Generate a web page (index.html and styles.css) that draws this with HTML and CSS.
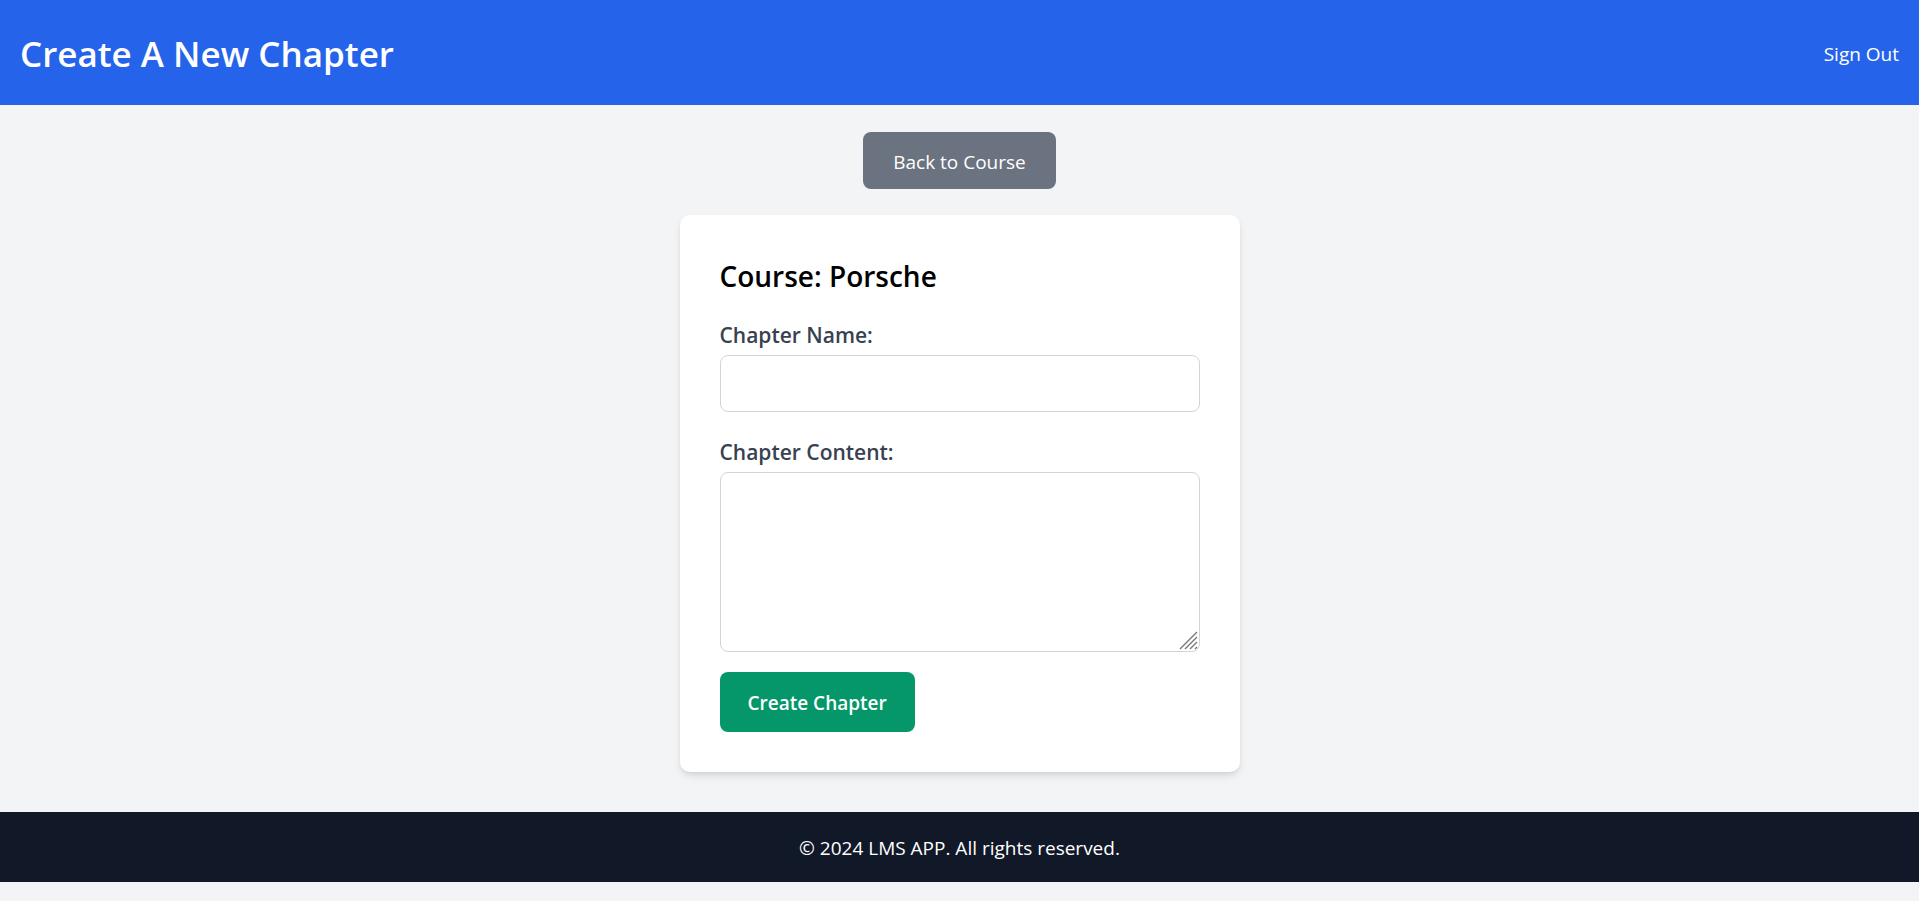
FILE: index.html
```html
<!DOCTYPE html>
<html lang="en">
<head>
  <meta charset="utf-8">
  <meta name="viewport" content="width=device-width, initial-scale=1">
  <title>Create A New Chapter</title>
  <link rel="stylesheet" href="styles.css">
</head>
<body>
  <header class="header">
    <h1 class="header-title">Create A New Chapter</h1>
    <a class="header-link" href="#">Sign Out</a>
  </header>
  <main class="main">
    <a class="back-link" href="#">Back to Course</a>
    <form class="card">
      <h2 class="card-title">Course: Porsche</h2>
      <div class="field">
        <label class="field-label" for="chapter-name">Chapter Name:</label>
        <input class="field-input" id="chapter-name" name="name" type="text">
      </div>
      <div class="field">
        <label class="field-label" for="chapter-content">Chapter Content:</label>
        <textarea class="field-input field-area" id="chapter-content" name="content"></textarea>
      </div>
      <button class="submit" type="submit">Create Chapter</button>
    </form>
  </main>
  <footer class="footer">
    <p class="footer-text">© 2024 LMS APP. All rights reserved.</p>
  </footer>
</body>
</html>
```

FILE: styles.css
```css
*,
*::before,
*::after {
  box-sizing: border-box;
}

body {
  margin: 0;
  background: #f3f4f6;
  color: #000;
  font-family: "Segoe UI", "Open Sans", "Noto Sans", sans-serif;
  font-size: 19px;
  line-height: 30px;
}

h1,
h2,
p {
  margin: 0;
}

a {
  color: inherit;
  text-decoration: none;
}

.header {
  display: flex;
  align-items: center;
  justify-content: space-between;
  padding: 31px 20px 29px;
  background: #2563eb;
  color: #fff;
}

.header-title {
  font-size: 35px;
  font-weight: 600;
  line-height: 45px;
}

.main {
  display: flex;
  flex-direction: column;
  align-items: center;
  gap: 26px;
  padding: 27px 20px 40px;
}

.back-link {
  padding: 15px 30px 12px;
  border-radius: 8px;
  background: #6b7280;
  color: #fff;
}

.card {
  width: 100%;
  max-width: 560px;
  padding: 40px;
  border-radius: 10px;
  background: #fff;
  box-shadow: 0 5px 8px -1px rgba(0, 0, 0, 0.1), 0 2px 5px -2px rgba(0, 0, 0, 0.1);
}

.card-title {
  margin-bottom: 18px;
  font-size: 28px;
  font-weight: 600;
  line-height: 42px;
}

.field {
  display: flex;
  flex-direction: column;
  margin-bottom: 20px;
}

.field-label {
  color: #374151;
  font-size: 21px;
  font-weight: 600;
  line-height: 40px;
}

.field-input {
  width: 100%;
  min-height: 57px;
  padding: 12px 15px;
  border: 1px solid #d1d5db;
  border-radius: 8px;
  background: #fff;
  color: inherit;
  font: inherit;
}

.field-area {
  display: block;
  height: 180px;
  background: #fff url("data:image/svg+xml,%3Csvg xmlns='http://www.w3.org/2000/svg' width='20' height='20' fill='none' stroke='%23777' stroke-width='1.4'%3E%3Cpath d='M1 18 18 1M6 18 18 6M11 18l7-7M16 18l2-2'/%3E%3C/svg%3E") no-repeat right bottom;
  resize: vertical;
}

.field-area::-webkit-resizer {
  background: transparent;
}

.submit {
  display: block;
  padding: 16px 28px 14px;
  border: 0;
  border-radius: 8px;
  background: #059669;
  color: #fff;
  font: inherit;
  font-weight: 600;
  cursor: pointer;
}

.footer {
  padding: 21px 20px 19px;
  background: #111827;
  color: #fff;
  text-align: center;
}
```
